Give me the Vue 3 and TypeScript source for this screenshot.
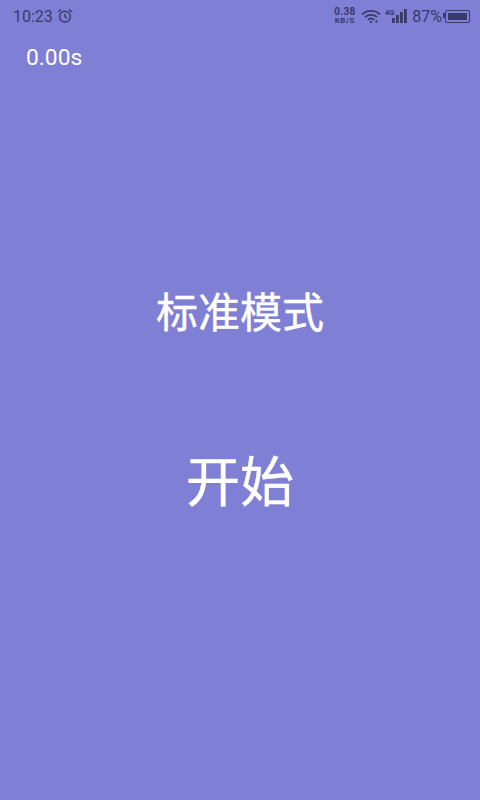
<script setup lang="ts">
const bars: number[] = [5, 8, 11, 14]
</script>

<template>
  <div class="page">
    <header class="status">
      <div class="left">
        <span class="time">10:23</span>
        <svg class="alarm" width="16" height="16" viewBox="0 0 16 16" fill="none" stroke="#3a3a68" stroke-width="1.4">
          <circle cx="8" cy="8.6" r="5.4" />
          <path d="M8 5.8v3l2 1.2M1 4 4 1.6M15 4 12 1.6" />
        </svg>
      </div>
      <div class="right">
        <div class="speed"><span>0.38</span><span class="unit">KB/S</span></div>
        <svg class="wifi" width="20" height="15" viewBox="0 0 20 15" fill="none" stroke="#3a3a68" stroke-width="1.7">
          <path d="M1 5.4C6 .6 14 .6 19 5.4M3.8 8.2C7.4 5.2 12.6 5.2 16.2 8.2M6.8 10.8C8.6 9.6 11.4 9.6 13.2 10.8" />
          <path d="M9 13h2M14.5 12.5h2" stroke-width="2" />
        </svg>
        <div class="signal">
          <span class="net">4G</span>
          <svg class="bars" width="15" height="14" viewBox="0 0 15 14" fill="#3a3a68">
            <rect v-for="(h, i) in bars" :key="h" :x="i * 4" :y="14 - h" width="2.8" :height="h" />
          </svg>
        </div>
        <span class="pct">87%</span>
        <div class="battery"><div class="fill"></div></div>
      </div>
    </header>
    <div class="timer">0.00s</div>
    <div class="center">
      <div class="mode">标准模式</div>
      <div class="start">开始</div>
    </div>
  </div>
</template>

<style scoped>
.page {
  width: 480px;
  height: 800px;
  background: #7f7fd5;
  display: flex;
  flex-direction: column;
  font-family: Roboto, "Noto Sans CJK SC", sans-serif;
  overflow: hidden;
}
.status {
  height: 32px;
  padding: 0 10px 0 13px;
  display: flex;
  justify-content: space-between;
  align-items: center;
  color: #3a3a68;
  flex: none;
}
.left, .right { display: flex; align-items: center; }
.time { font-size: 16px; }
.alarm { margin-left: 4px; }
.speed {
  display: flex;
  flex-direction: column;
  align-items: center;
  font-size: 10px;
  font-weight: 700;
  letter-spacing: .3px;
  line-height: 9px;
  width: 22px;
}
.unit { font-size: 8px; letter-spacing: .6px; }
.wifi { margin-left: 5px; }
.signal { margin-left: 4px; display: flex; align-items: flex-start; }
.net { font-size: 7.5px; font-weight: 700; line-height: 8px; }
.bars { display: block; margin-left: -2px; }
.pct { font-size: 16px; margin-left: 5px; }
.battery {
  position: relative;
  width: 25px;
  height: 13px;
  margin-left: 3px;
  border: 1.5px solid #3a3a68;
  border-radius: 2px;
  padding: 2px;
  box-sizing: border-box;
}
.battery::before {
  content: "";
  position: absolute;
  left: -3.5px;
  top: 2.5px;
  width: 2px;
  height: 5px;
  background: #3a3a68;
}
.fill { height: 100%; width: 100%; background: #3a3a68; }
.timer {
  color: #fff;
  font-size: 22.8px;
  line-height: 26px;
  margin: 13px 0 0 26px;
  flex: none;
}
.center {
  display: flex;
  flex-direction: column;
  align-items: center;
  color: #fff;
  padding-top: 218px;
}
.mode { font-size: 42px; line-height: 50px; -webkit-text-stroke: .4px #fff; }
.start { font-size: 54px; line-height: 64px; margin-top: 113px; -webkit-text-stroke: .4px #fff; }
</style>
